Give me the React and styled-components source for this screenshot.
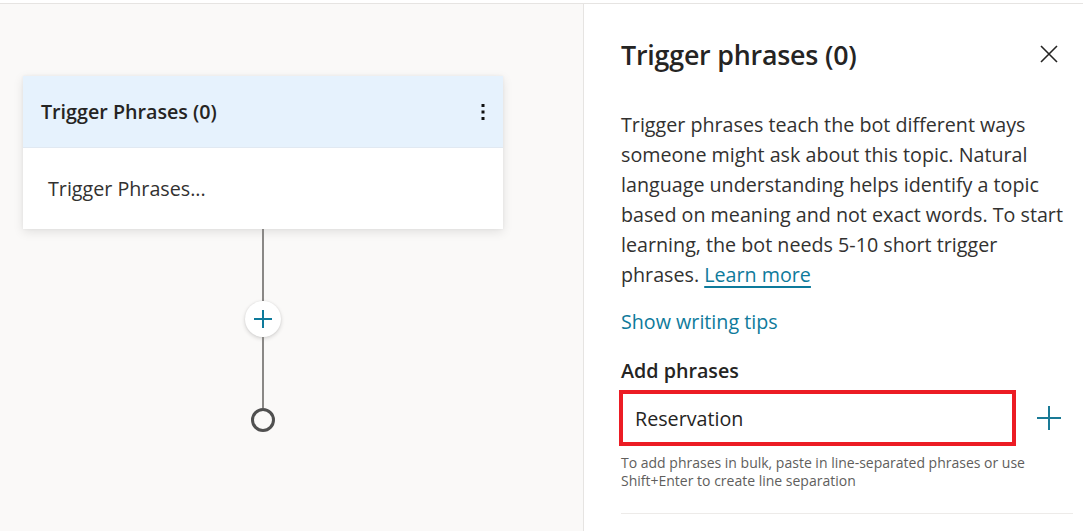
import React from "react";
import styled, { createGlobalStyle } from "styled-components";

const Global = createGlobalStyle`
  html, body { margin: 0; padding: 0; background: #ffffff; }
  body { font-family: "Open Sans", "Noto Sans", sans-serif; color: #323130; }
  * { box-sizing: border-box; }
`;

const Page = styled.div`
  width: 1083px;
  height: 531px;
  padding-top: 3px;
  background: #ffffff;
  overflow: hidden;
`;

const Main = styled.div`
  display: flex;
  height: 528px;
  border-top: 1px solid #e6e4e2;
`;

const Canvas = styled.div`
  width: 584px;
  flex: none;
  background: #faf9f8;
  border-right: 1px solid #e6e4e2;
  padding: 72px 0 0 23px;
  display: flex;
  flex-direction: column;
`;

const Card = styled.div`
  width: 480px;
  background: #ffffff;
  box-shadow: 0 3px 10px rgba(0, 0, 0, 0.10), 0 0 3px rgba(0, 0, 0, 0.05);
`;

const CardHeader = styled.div`
  height: 72px;
  background: #e6f2fd;
  border-bottom: 1px solid #e1e9f2;
  display: flex;
  align-items: center;
  justify-content: space-between;
  padding: 0 10px 0 18px;
`;

const CardTitle = styled.div`
  font-size: 19.7px;
  font-weight: 600;
  color: #252423;
`;

const MoreButton = styled.div`
  width: 20px;
  height: 24px;
  display: flex;
  align-items: center;
  justify-content: center;
`;

const CardBody = styled.div`
  height: 81px;
  display: flex;
  align-items: center;
  padding-left: 25px;
  font-size: 19.7px;
  color: #323130;
`;

const Connector = styled.div`
  width: 480px;
  display: flex;
  flex-direction: column;
  align-items: center;
`;

const Line = styled.div`
  width: 2px;
  height: ${(p) => p.$h}px;
  background: #8a8886;
`;

const AddNode = styled.div`
  width: 36px;
  height: 36px;
  border-radius: 50%;
  background: #ffffff;
  box-shadow: 0 1.6px 4px rgba(0, 0, 0, 0.16), 0 0 2px rgba(0, 0, 0, 0.08);
  display: flex;
  align-items: center;
  justify-content: center;
`;

const EndNode = styled.div`
  width: 24px;
  height: 24px;
  border-radius: 50%;
  border: 3px solid #505050;
  background: #faf9f8;
`;

const Panel = styled.div`
  flex: 1;
  padding: 0 12px 0 37px;
  display: flex;
  flex-direction: column;
`;

const PanelHeader = styled.div`
  display: flex;
  align-items: center;
  justify-content: space-between;
  height: 38px;
  margin-top: 31px;
`;

const PanelTitle = styled.h1`
  margin: 0;
  font-size: 26.8px;
  font-weight: 600;
  color: #252423;
  letter-spacing: -0.2px;
`;

const CloseButton = styled.div`
  width: 24px;
  height: 24px;
  margin-right: 12px;
  display: flex;
  align-items: center;
  justify-content: center;
`;

const Description = styled.p`
  margin: 37px 0 0;
  font-size: 19.7px;
  line-height: 30px;
  color: #323130;
  width: 452px;
`;

const Link = styled.a`
  color: #0e7a9b;
  text-decoration: ${(p) => (p.$underline ? "underline" : "none")};
  text-decoration-thickness: 2px;
  text-underline-offset: 4px;
  cursor: pointer;
`;

const TipsRow = styled.div`
  margin-top: 17px;
  font-size: 19.7px;
  line-height: 30px;
`;

const Label = styled.div`
  margin-top: 19px;
  font-size: 19.7px;
  font-weight: 600;
  line-height: 30px;
  color: #252423;
`;

const InputRow = styled.div`
  display: flex;
  align-items: center;
  margin-top: 4px;
`;

const InputBox = styled.div`
  width: 397px;
  height: 56px;
  margin-left: -2px;
  border: 4px solid #ec1c24;
  display: flex;
  align-items: center;
  padding-left: 12px;
  font-size: 19.7px;
  color: #252423;
`;

const AddButton = styled.div`
  width: 24px;
  height: 24px;
  margin-left: 21px;
  margin-top: -1px;
  display: flex;
  align-items: center;
  justify-content: center;
`;

const Helper = styled.div`
  margin-top: 8px;
  font-size: 14px;
  line-height: 18px;
  color: #605e5c;
  width: 440px;
`;

const Divider = styled.div`
  margin-top: 23px;
  height: 1px;
  background: #edebe9;
`;

export default function App() {
  return (
    <>
      <Global />
      <Page>
        <Main>
          <Canvas>
            <Card>
              <CardHeader>
                <CardTitle>Trigger Phrases (0)</CardTitle>
                <MoreButton>
                  <svg width="4" height="18" viewBox="0 0 4 18">
                    <rect x="0.5" y="1" width="3" height="3" fill="#111" />
                    <rect x="0.5" y="7.5" width="3" height="3" fill="#111" />
                    <rect x="0.5" y="14" width="3" height="3" fill="#111" />
                  </svg>
                </MoreButton>
              </CardHeader>
              <CardBody>Trigger Phrases...</CardBody>
            </Card>
            <Connector>
              <Line $h={72} />
              <AddNode>
                <svg width="20" height="20" viewBox="0 0 20 20">
                  <path d="M10 1v18M1 10h18" stroke="#0e7a9b" strokeWidth="2" />
                </svg>
              </AddNode>
              <Line $h={71} />
              <EndNode />
            </Connector>
          </Canvas>
          <Panel>
            <PanelHeader>
              <PanelTitle>Trigger phrases (0)</PanelTitle>
              <CloseButton>
                <svg width="18" height="18" viewBox="0 0 18 18">
                  <path d="M1 1l16 16M17 1L1 17" stroke="#252423" strokeWidth="1.6" />
                </svg>
              </CloseButton>
            </PanelHeader>
            <Description>
              Trigger phrases teach the bot different ways someone might ask about
              this topic. Natural language understanding helps identify a topic
              based on meaning and not exact words. To start learning, the bot
              needs 5-10 short trigger phrases. <Link $underline>Learn more</Link>
            </Description>
            <TipsRow>
              <Link>Show writing tips</Link>
            </TipsRow>
            <Label>Add phrases</Label>
            <InputRow>
              <InputBox>Reservation</InputBox>
              <AddButton>
                <svg width="24" height="24" viewBox="0 0 24 24">
                  <path d="M12 0v24M0 12h24" stroke="#1a7a96" strokeWidth="2" />
                </svg>
              </AddButton>
            </InputRow>
            <Helper>
              To add phrases in bulk, paste in line-separated phrases or use
              Shift+Enter to create line separation
            </Helper>
            <Divider />
          </Panel>
        </Main>
      </Page>
    </>
  );
}
